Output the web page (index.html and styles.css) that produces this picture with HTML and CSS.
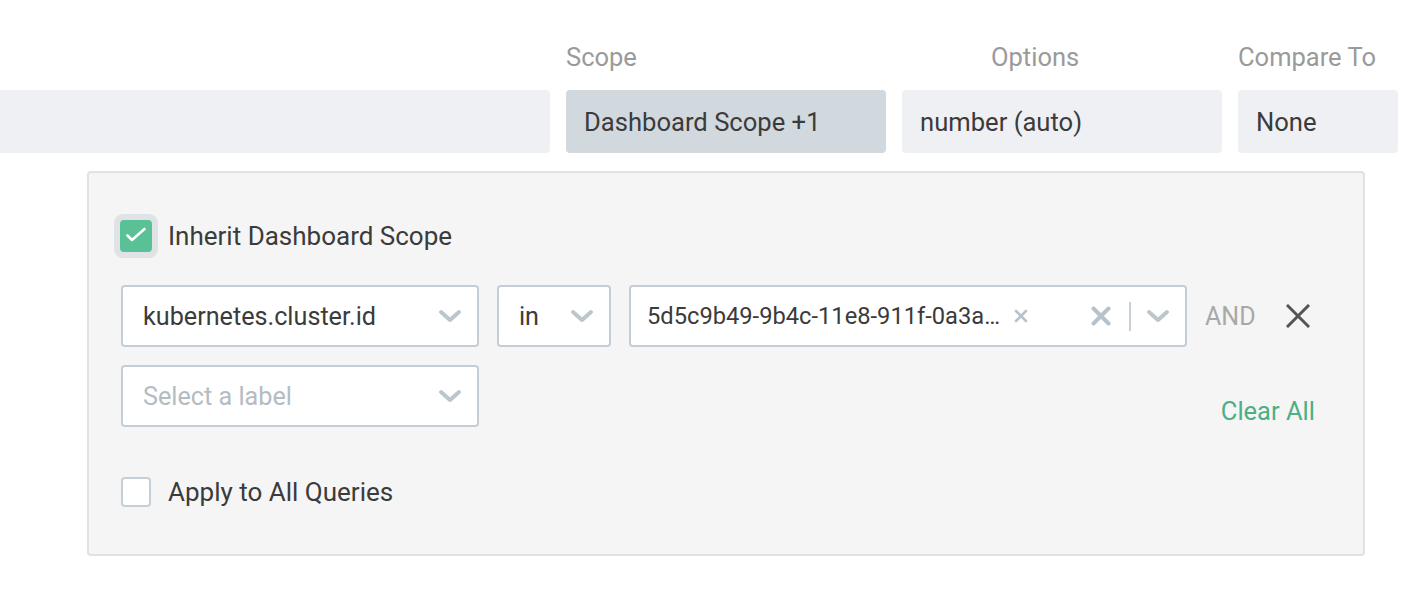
FILE: index.html
```html
<!DOCTYPE html>
<html>
<head>
<meta charset="utf-8">
<link rel="stylesheet" href="styles.css">
</head>
<body>
<div class="top">
  <div class="col col-main">
    <div class="label"></div>
    <div class="field"></div>
  </div>
  <div class="col col-scope">
    <div class="label">Scope</div>
    <div class="field field-active">Dashboard Scope +1</div>
  </div>
  <div class="col col-options">
    <div class="label label-options">Options</div>
    <div class="field">number (auto)</div>
  </div>
  <div class="col col-compare">
    <div class="label">Compare To</div>
    <div class="field">None</div>
  </div>
</div>

<div class="panel">
  <div class="check-row">
    <span class="checkbox checked">
      <svg class="tick" viewBox="0 0 32 32" width="32" height="32"><polyline points="7.5,15.5 12,20 24.5,9" fill="none" stroke="#fff" stroke-width="2.6" stroke-linecap="round" stroke-linejoin="round"/></svg>
    </span>
    <span class="check-label">Inherit Dashboard Scope</span>
  </div>

  <div class="filter-row">
    <div class="select sel-key">
      <span class="sel-text">kubernetes.cluster.id</span>
      <svg class="chev" viewBox="0 0 24 14" width="24" height="14"><polyline points="3,3 12,11 21,3" fill="none" stroke="#bcc6cd" stroke-width="4" stroke-linecap="round" stroke-linejoin="round"/></svg>
    </div>
    <div class="select sel-op">
      <span class="sel-text">in</span>
      <svg class="chev" viewBox="0 0 24 14" width="24" height="14"><polyline points="3,3 12,11 21,3" fill="none" stroke="#bcc6cd" stroke-width="4" stroke-linecap="round" stroke-linejoin="round"/></svg>
    </div>
    <div class="select sel-val">
      <span class="tag">5d5c9b49-9b4c-11e8-911f-0a3a…</span>
      <svg class="tag-x" viewBox="0 0 14 14" width="14" height="14"><path d="M2,2 L12,12 M12,2 L2,12" stroke="#b8c2ca" stroke-width="2.6" stroke-linecap="round"/></svg>
      <span class="spacer"></span>
      <svg class="clear-x" viewBox="0 0 20 20" width="20" height="20"><path d="M2.5,2.5 L17.5,17.5 M17.5,2.5 L2.5,17.5" stroke="#b8c2ca" stroke-width="4" stroke-linecap="round"/></svg>
      <span class="sep"></span>
      <svg class="chev" viewBox="0 0 24 14" width="24" height="14"><polyline points="3,3 12,11 21,3" fill="none" stroke="#bcc6cd" stroke-width="4" stroke-linecap="round" stroke-linejoin="round"/></svg>
    </div>
    <span class="and">AND</span>
    <svg class="remove" viewBox="0 0 24 24" width="24" height="24"><path d="M2,2 L22,22 M22,2 L2,22" stroke="#555" stroke-width="3" stroke-linecap="square"/></svg>
  </div>

  <div class="filter-row row2">
    <div class="select sel-key">
      <span class="sel-text placeholder">Select a label</span>
      <svg class="chev" viewBox="0 0 24 14" width="24" height="14"><polyline points="3,3 12,11 21,3" fill="none" stroke="#bcc6cd" stroke-width="4" stroke-linecap="round" stroke-linejoin="round"/></svg>
    </div>
    <span class="spacer"></span>
    <span class="clear-all">Clear All</span>
  </div>

  <div class="check-row apply">
    <span class="checkbox"></span>
    <span class="check-label">Apply to All Queries</span>
  </div>
</div>
</body>
</html>
```

FILE: styles.css
```css
* { box-sizing: border-box; }
html, body { margin: 0; padding: 0; background: #fff; }
body {
  font-family: Roboto, "Liberation Sans", sans-serif;
  color: #3b3b3b;
  width: 1412px;
  height: 593px;
  overflow: hidden;
}

.top {
  display: flex;
  gap: 16px;
  padding-top: 42px;
}
.col { display: flex; flex-direction: column; }
.col-main { width: 550px; }
.col-scope { width: 320px; }
.col-options { width: 320px; }
.col-compare { width: 160px; }

.label {
  height: 30px;
  line-height: 30px;
  font-size: 25.5px;
  color: #9a9a9a;
  margin-bottom: 18px;
  white-space: nowrap;
}
.label-options { padding-left: 89px; }

.field {
  height: 63px;
  background: #eff0f3;
  border-radius: 4px;
  display: flex;
  align-items: center;
  padding-left: 18px;
  font-size: 25.6px;
  color: #3b3b3b;
}
.col-main .field { border-radius: 0 4px 4px 0; }
.field-active { background: #d1d9df; }

.panel {
  margin: 18px 0 0 87px;
  width: 1278px;
  height: 385px;
  background: #f5f5f5;
  border: 2px solid #e2e2e2;
  border-radius: 4px;
  padding: 48px 48px 0 32px;
}

.check-row {
  display: flex;
  align-items: center;
  height: 30px;
  gap: 17px;
}
.checkbox {
  position: relative;
  width: 30px;
  height: 30px;
  border: 2px solid #c6cfd6;
  border-radius: 4px;
  background: #fff;
  flex: none;
}
.checkbox.checked {
  background: #5ac095;
  border-color: #5ac095;
  box-shadow: 0 0 0 1px #5ac095, 0 0 0 7px #dfe3e6;
  border-radius: 3px;
}
.tick {
  position: absolute;
  left: -3px;
  top: -3px;
  display: block;
}
.check-label {
  font-size: 26px;
  color: #3b3b3b;
  white-space: nowrap;
}

.filter-row {
  display: flex;
  align-items: center;
  gap: 18px;
  margin-top: 34px;
  height: 62px;
}
.row2 {
  margin-top: 18px;
  align-items: flex-end;
}

.select {
  height: 62px;
  background: #fff;
  border: 2px solid #c4cdd5;
  border-radius: 4px;
  display: flex;
  align-items: center;
  padding: 0 15px 0 20px;
  flex: none;
}
.sel-key { width: 358px; }
.sel-op { width: 114px; }
.sel-val { width: 558px; padding-left: 16px; }
.sel-text {
  font-size: 25.2px;
  color: #3b3b3b;
  flex: 1;
  white-space: nowrap;
}
.placeholder { color: #b4bcc3; }
.chev { flex: none; display: block; }

.tag {
  font-size: 23.7px;
  color: #3b3b3b;
  white-space: nowrap;
}
.tag-x { margin-left: 14px; flex: none; }
.spacer { flex: 1; }
.clear-x { flex: none; }
.sep {
  width: 2px;
  height: 29px;
  background: #c6cfd6;
  margin: 0 15px 0 18px;
  flex: none;
}

.and {
  font-size: 25px;
  color: #a8a8a8;
}
.remove { margin-left: 12px; flex: none; }

.clear-all {
  font-size: 25.5px;
  color: #4caf86;
  line-height: 30px;
  margin-bottom: 1px;
  margin-right: 0;
}

.apply { margin-top: 50px; }
```
